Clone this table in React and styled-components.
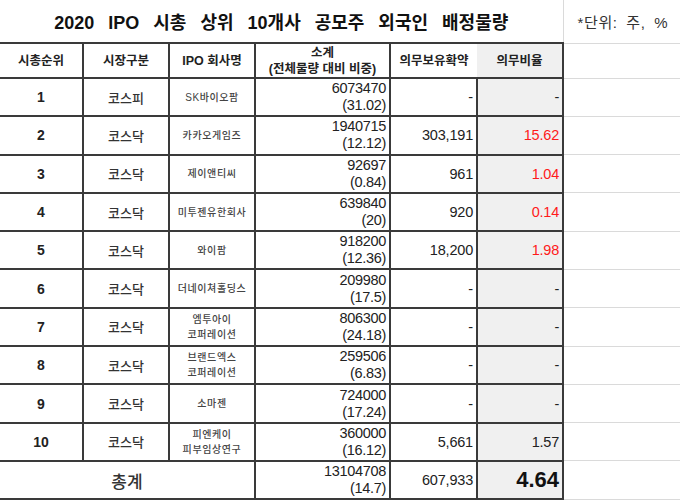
import styled, { createGlobalStyle } from "styled-components";

const GlobalStyle = createGlobalStyle`
  html, body {
    margin: 0;
    padding: 0;
    background: #fff;
  }
  body {
    font-family: "Liberation Sans", "Noto Sans CJK KR", sans-serif;
    color: #222;
  }
`;

const LINE = "2px solid #3a3a3a";
const GRID = "1px solid #dadada";
const SHADE = "#f0f0f0";

const Sheet = styled.table`
  width: 680px;
  border-collapse: collapse;
  table-layout: fixed;
`;

const TitleRow = styled.tr`
  height: 43px;
`;

const TitleCell = styled.td`
  padding: 0;
  text-align: center;
  font-size: 18px;
  font-weight: 700;
  word-spacing: 9px;
  color: #111;
  border-right: ${GRID};
`;

const NoteCell = styled.td`
  padding: 0 0 0 14px;
  font-size: 15px;
  letter-spacing: 0.6px;
  word-spacing: 4px;
  color: #333;
  border-bottom: ${GRID};
`;

const HeadRow = styled.tr`
  height: 35px;
`;

const Row = styled.tr`
  height: 38.3px;
`;

const HeadCell = styled.th`
  padding: 0;
  border: ${LINE};
  border-left: ${(p) => (p.$first ? "hidden" : LINE)};
  border-right: ${(p) => (p.$open ? "hidden" : LINE)};
  background: ${(p) => (p.$shade ? SHADE : "#fff")};
  font-size: 12.5px;
  font-weight: 700;
  line-height: 16px;
  color: #222;
  text-align: center;
  vertical-align: middle;
`;

const Cell = styled.td`
  padding: 0 3px;
  border: ${LINE};
  border-left: ${(p) => (p.$first ? "hidden" : LINE)};
  background: ${(p) => (p.$shade ? SHADE : "#fff")};
  text-align: center;
  vertical-align: middle;
  overflow: hidden;
  white-space: nowrap;
`;

const RankCell = styled(Cell)`
  font-size: 14px;
  font-weight: 700;
  color: #222;
`;

const MarketCell = styled(Cell)`
  font-size: 13px;
  font-weight: 500;
  color: #333;
`;

const CompanyCell = styled(Cell)`
  font-size: 10px;
  font-weight: 500;
  letter-spacing: 0.6px;
  line-height: 15px;
  color: #444;
`;

const SubtotalCell = styled(Cell)`
  text-align: right;
  font-size: 14.5px;
  line-height: 17px;
  color: #222;
  letter-spacing: -0.3px;
`;

const NumCell = styled(Cell)`
  text-align: right;
  font-size: 14.5px;
  color: ${(p) => (p.$red ? "#ff1a1a" : "#222")};
  letter-spacing: -0.2px;
`;

const BigRate = styled(Cell)`
  text-align: right;
  font-size: 22px;
  font-weight: 700;
  color: #111;
`;

const TotalLabel = styled(Cell)`
  font-size: 17px;
  font-weight: 500;
  color: #333;
`;

const GridCell = styled.td`
  padding: 0;
  border: ${GRID};
`;

const Line = styled.div``;

const rows = [
  ["1", "코스피", ["SK바이오팜"], "6073470", "(31.02)", "-", "-", false],
  ["2", "코스닥", ["카카오게임즈"], "1940715", "(12.12)", "303,191", "15.62", true],
  ["3", "코스닥", ["제이앤티씨"], "92697", "(0.84)", "961", "1.04", true],
  ["4", "코스닥", ["미투젠유한회사"], "639840", "(20)", "920", "0.14", true],
  ["5", "코스닥", ["와이팜"], "918200", "(12.36)", "18,200", "1.98", true],
  ["6", "코스닥", ["더네이쳐홀딩스"], "209980", "(17.5)", "-", "-", false],
  ["7", "코스닥", ["엠투아이", "코퍼레이션"], "806300", "(24.18)", "-", "-", false],
  ["8", "코스닥", ["브랜드엑스", "코퍼레이션"], "259506", "(6.83)", "-", "-", false],
  ["9", "코스닥", ["소마젠"], "724000", "(17.24)", "-", "-", false],
  ["10", "코스닥", ["피엔케이", "피부임상연구"], "360000", "(16.12)", "5,661", "1.57", false],
];

export default function App() {
  return (
    <>
      <GlobalStyle />
      <Sheet>
        <colgroup>
          <col style={{ width: 83 }} />
          <col style={{ width: 86 }} />
          <col style={{ width: 86 }} />
          <col style={{ width: 135 }} />
          <col style={{ width: 87 }} />
          <col style={{ width: 86 }} />
          <col style={{ width: 117 }} />
        </colgroup>
        <tbody>
          <TitleRow>
            <TitleCell colSpan={6}>2020 IPO 시총 상위 10개사 공모주 외국인 배정물량</TitleCell>
            <NoteCell>*단위: 주, %</NoteCell>
          </TitleRow>
          <HeadRow>
            <HeadCell $first>시총순위</HeadCell>
            <HeadCell>시장구분</HeadCell>
            <HeadCell>IPO 회사명</HeadCell>
            <HeadCell>
              <Line>소계</Line>
              <Line>(전체물량 대비 비중)</Line>
            </HeadCell>
            <HeadCell $open>의무보유확약</HeadCell>
            <HeadCell $shade>의무비율</HeadCell>
            <GridCell />
          </HeadRow>
          {rows.map(([rank, market, names, total, share, held, rate, red]) => (
            <Row key={rank}>
              <RankCell $first>{rank}</RankCell>
              <MarketCell>{market}</MarketCell>
              <CompanyCell>
                {names.map((n) => (
                  <Line key={n}>{n}</Line>
                ))}
              </CompanyCell>
              <SubtotalCell>
                <Line>{total}</Line>
                <Line>{share}</Line>
              </SubtotalCell>
              <NumCell>{held}</NumCell>
              <NumCell $shade $red={red}>
                {rate}
              </NumCell>
              <GridCell />
            </Row>
          ))}
          <Row>
            <TotalLabel $first colSpan={3}>
              총계
            </TotalLabel>
            <SubtotalCell>
              <Line>13104708</Line>
              <Line>(14.7)</Line>
            </SubtotalCell>
            <NumCell>607,933</NumCell>
            <BigRate $shade>4.64</BigRate>
            <GridCell />
          </Row>
        </tbody>
      </Sheet>
    </>
  );
}
